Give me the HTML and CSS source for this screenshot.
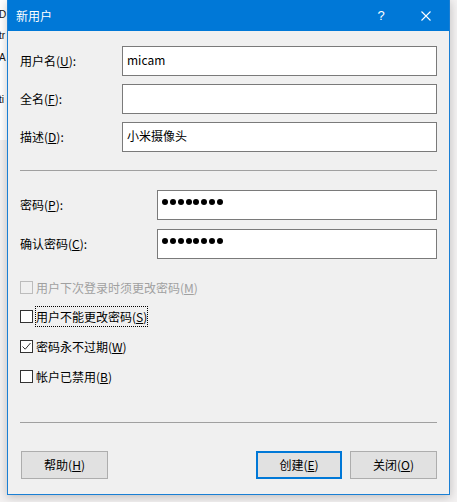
FILE: index.html
```html
<!DOCTYPE html>
<html lang="zh-CN">
<head>
<meta charset="utf-8">
<title>新用户</title>
<link rel="stylesheet" href="styles.css">
</head>
<body>
<div class="desktop">
  <div class="backwin">
    <div class="frag f1">D</div>
    <div class="frag f2">tr</div>
    <div class="frag f3">A</div>
    <div class="frag f4">ti</div>
  </div>
  <div class="dialog">
    <div class="titlebar">
      <span class="title">新用户</span>
      <span class="tbtn help">?</span>
      <span class="tbtn close">
        <svg width="10" height="10" viewBox="0 0 10 10"><path d="M0.5 0.5 L9.5 9.5 M9.5 0.5 L0.5 9.5" stroke="#fff" stroke-width="1.1" fill="none"/></svg>
      </span>
    </div>
    <div class="content">
      <div class="row first">
        <span class="lbl">用户名(<u>U</u>):</span>
        <div class="field wide">micam</div>
      </div>
      <div class="row">
        <span class="lbl">全名(<u>F</u>):</span>
        <div class="field wide"></div>
      </div>
      <div class="row">
        <span class="lbl">描述(<u>D</u>):</span>
        <div class="field wide">小米摄像头</div>
      </div>
      <div class="sep sep1"></div>
      <div class="row pwrow">
        <span class="lbl">密码(<u>P</u>):</span>
        <div class="field pw"><i></i><i></i><i></i><i></i><i></i><i></i><i></i><i></i></div>
      </div>
      <div class="row confirm">
        <span class="lbl">确认密码(<u>C</u>):</span>
        <div class="field pw"><i></i><i></i><i></i><i></i><i></i><i></i><i></i><i></i></div>
      </div>
      <div class="checks">
        <div class="chk disabled"><span class="box"></span><span class="txt">用户下次登录时须更改密码(<u>M</u>)</span></div>
        <div class="chk c2"><span class="box"></span><span class="txt focus">用户不能更改密码(<u>S</u>)</span></div>
        <div class="chk c3"><span class="box"><svg width="11" height="11" viewBox="0 0 11 11"><path d="M1.5 5.5 L4.2 8.2 L9.5 2" stroke="#333" stroke-width="1" fill="none"/></svg></span><span class="txt">密码永不过期(<u>W</u>)</span></div>
        <div class="chk c4"><span class="box"></span><span class="txt">帐户已禁用(<u>B</u>)</span></div>
      </div>
      <div class="sep sep2"></div>
      <div class="buttons">
        <div class="btn helpbtn">帮助(<u>H</u>)</div>
        <div class="btn default">创建(<u>E</u>)</div>
        <div class="btn closebtn">关闭(<u>O</u>)</div>
      </div>
    </div>
  </div>
</div>
</body>
</html>
```

FILE: styles.css
```css
html, body {
  margin: 0;
  padding: 0;
}
body {
  width: 457px;
  height: 502px;
  overflow: hidden;
  background: #f3f1f1;
  font-family: "Noto Sans CJK SC", "Microsoft YaHei", sans-serif;
  font-size: 12px;
  color: #000;
}
.desktop {
  position: relative;
  width: 457px;
  height: 502px;
}
.backwin {
  width: 7px;
  height: 140px;
  background: #fff;
  display: flex;
  flex-direction: column;
  overflow: hidden;
  font-family: "Liberation Sans", sans-serif;
  font-size: 10px;
  color: #111;
}
.frag {
  height: 12px;
  line-height: 12px;
  margin-left: -1px;
  white-space: nowrap;
}
.f1 { margin-top: 9px; }
.f2 { margin-top: 9px; }
.f3 { margin-top: 10px; }
.f4 { margin-top: 30px; }

.dialog {
  position: absolute;
  left: 7px;
  top: 0;
  width: 443px;
  height: 495px;
  box-sizing: border-box;
  border: 1px solid #1a7fd4;
  border-top: none;
  background: #f0f0f0;
  box-shadow: 0 2px 9px rgba(0, 0, 0, 0.22);
  display: flex;
  flex-direction: column;
}
.titlebar {
  height: 31px;
  flex: none;
  background: #0078d7;
  color: #fff;
  display: flex;
  align-items: center;
}
.title {
  flex: 1;
  padding-left: 8px;
  line-height: 16px;
}
.tbtn {
  width: 46px;
  height: 31px;
  display: flex;
  align-items: center;
  justify-content: center;
}
.help {
  font-family: "Liberation Sans", sans-serif;
  font-size: 13px;
  padding-left: 2px;
  box-sizing: border-box;
}
.close svg { display: block; }

.content {
  padding: 0 12px;
  display: flex;
  flex-direction: column;
}
.row {
  display: flex;
  align-items: center;
  height: 30px;
  margin-top: 8px;
}
.row.first { margin-top: 15px; }
.row.pwrow { margin-top: 19px; }
.row.confirm { margin-top: 9px; }
.lbl {
  flex: 1;
  line-height: 16px;
  white-space: nowrap;
}
u {
  text-decoration: underline;
  text-underline-offset: 1px;
  text-decoration-thickness: 1px;
}
.field {
  box-sizing: border-box;
  height: 30px;
  border: 1px solid #7a7a7a;
  background: #fff;
  padding: 3px 4px 0;
  line-height: 20px;
  white-space: nowrap;
}
.field.wide { width: 315px; }
.field.pw {
  width: 280px;
  display: flex;
  align-items: flex-start;
  gap: 1.85px;
  padding-top: 8px;
}
.field.pw i {
  display: block;
  width: 6px;
  height: 6px;
  border-radius: 50%;
  background: #000;
}

.sep {
  height: 1px;
  background: #a0a0a0;
  flex: none;
}
.sep1 { margin-top: 18px; }
.sep2 { margin-top: 35px; }

.checks {
  display: flex;
  flex-direction: column;
  margin-top: 18px;
}
.chk {
  display: flex;
  align-items: center;
  height: 21px;
}
.chk.c2 { margin-top: 8px; }
.chk.c3 { margin-top: 9px; }
.chk.c4 { margin-top: 9px; }
.box {
  width: 13px;
  height: 13px;
  box-sizing: border-box;
  border: 1px solid #333;
  background: #fff;
  margin-right: 2px;
  flex: none;
  display: flex;
  align-items: center;
  justify-content: center;
}
.box svg { display: block; }
.txt {
  box-sizing: border-box;
  height: 21px;
  line-height: 19px;
  border: 1px dotted transparent;
  white-space: nowrap;
}
.txt.focus { border-color: #000; }
.chk.disabled .box {
  border-color: #bcbcbc;
  background: #f0f0f0;
}
.chk.disabled .txt { color: #a0a0a0; }

.buttons {
  display: flex;
  margin-top: 28px;
}
.btn {
  box-sizing: border-box;
  height: 28px;
  width: 87px;
  background: #e1e1e1;
  border: 1px solid #adadad;
  display: flex;
  align-items: center;
  justify-content: center;
  line-height: 16px;
  white-space: nowrap;
}
.helpbtn { margin-left: 1px; }
.default {
  width: 86px;
  margin-left: auto;
  border: 2px solid #0078d7;
}
.closebtn { margin-left: 8px; }
```
